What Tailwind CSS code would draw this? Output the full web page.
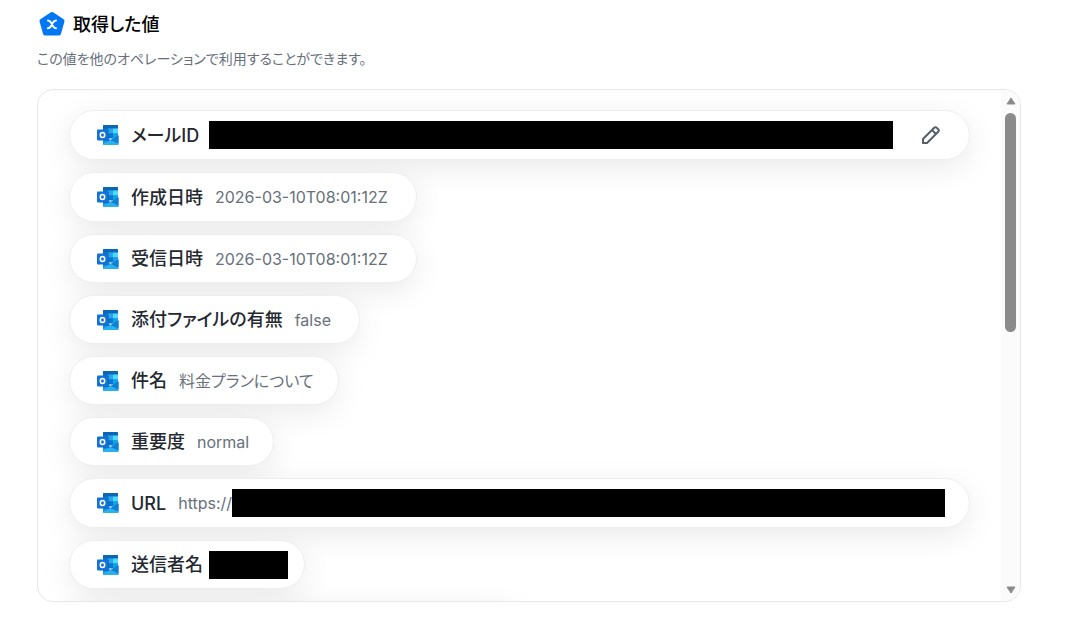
<!DOCTYPE html>
<html lang="ja">
<head>
    <meta charset="UTF-8">
    <meta name="viewport" content="width=device-width, initial-scale=1.0">
    <title>取得した値</title>
    <script src="https://cdn.jsdelivr.net/npm/@tailwindcss/browser@4"></script>
</head>
<body class="bg-white font-[Inter,'Noto_Sans_CJK_JP',sans-serif] [font-feature-settings:'palt']">

<!-- Outlook アイコン -->
<svg class="hidden">
    <symbol id="outlook" viewBox="0 0 22 20">
        <path d="M7 0h13a1 1 0 0 1 1 1v12H6V1a1 1 0 0 1 1-1z" fill="#0f78d4"/>
        <path d="M7 0h13a1 1 0 0 1 1 1v2.500H6V1a1 1 0 0 1 1-1z" fill="#0a67b8"/>
        <path d="M11 3.500h5v5h-5z" fill="#28a8ea"/>
        <path d="M16 3.500h5v5h-5z" fill="#50d9ff"/>
        <path d="M11 8.500h5v5h-5z" fill="#0078d4"/>
        <path d="M16 8.500h5v3.500l-5 2z" fill="#14a0e6"/>
        <path d="M6 11l8 4 7.500-4.500V19a1 1 0 0 1-1 1H7a1 1 0 0 1-1-1z" fill="#1490df"/>
        <path d="M13.500 15l8-4.800V18z" fill="#0f7fd0"/>
        <path d="M6 18.500l7.500-3.500 8 4a1 1 0 0 1-1 1H7a1 1 0 0 1-1-1z" fill="#28b0f0"/>
        <path d="M6 4.500h5a1 1 0 0 1 1 1V15a1 1 0 0 1-1 1H6z" fill="#0a4f9f" opacity=".5"/>
        <rect y="4.500" width="11" height="11" rx="1" fill="#1272d6"/>
        <ellipse cx="5.500" cy="10" rx="2.200" ry="2.500" fill="none" stroke="#fff" stroke-width="1.500"/>
    </symbol>
</svg>

<main class="pl-[37px] pr-16 pt-2">
    <h1 class="flex h-8 items-center gap-2 pl-[2px] text-[18px] font-medium text-black">
        <svg class="size-[26px]" viewBox="0 0 26 26" fill="none">
            <path d="M13 3L23.500 10 20 22.500H6L2.500 10z" fill="#0078f5" stroke="#0078f5" stroke-width="4" stroke-linejoin="round"/>
            <path d="M9 9.500c1.600 0 2.200.600 3 2.100l2 3.500c.800 1.500 1.500 2.100 3 2.100M17 9.500c-1.400 0-2.200.700-3.200 2.100L12 15.100c-1 1.500-1.800 2.100-3.200 2.100" stroke="#fff" stroke-width="2" stroke-linecap="round"/>
        </svg>
        取得した値
    </h1>
    <p class="mt-2 text-[14px] leading-[22px] text-[#67707b]">この値を他のオペレーションで利用することができます。</p>

    <section class="mt-[19px] flex h-[calc(100vh-121px)] overflow-hidden rounded-2xl border border-[#e5e7e9]">
        <ul class="isolate flex min-w-0 flex-1 flex-col items-start gap-3 overflow-hidden pl-[31px] pr-[31px] pt-5 text-[18px] font-medium text-[#24292f]
            *:relative *:flex *:shrink-0 *:items-center *:rounded-full *:border *:border-[#eceef0] *:bg-white *:pl-[27px]
            *:before:absolute *:before:inset-0 *:before:-z-10 *:before:rounded-full *:before:shadow-[0_8px_32px_rgba(0,0,0,0.09)]">
            <li class="h-[50px] w-full pr-7">
                <svg class="mr-3 h-5 w-[22px] shrink-0"><use href="#outlook"/></svg>
                <span>メールID</span>
                <span class="ml-2.5 h-7 flex-1 bg-black"></span>
                <button type="button" aria-label="編集" class="ml-7 text-[#57606a]">
                    <svg class="size-5" viewBox="0 0 20 20" fill="none" stroke="currentColor" stroke-width="2" stroke-linejoin="round">
                        <path d="M2 18v-4L13.200 2.800a1.800 1.800 0 0 1 2.500 0l1.500 1.500a1.800 1.800 0 0 1 0 2.500L6 18zM11 5l4 4"/>
                    </svg>
                </button>
            </li>
            <li class="h-[50px] pr-7">
                <svg class="mr-3 h-5 w-[22px]"><use href="#outlook"/></svg>
                <span>作成日時</span>
                <span class="ml-3 text-[16px] font-normal text-[#67707b]">2026-03-10T08:01:12Z</span>
            </li>
            <li class="h-[49px] pr-7">
                <svg class="mr-3 h-5 w-[22px]"><use href="#outlook"/></svg>
                <span>受信日時</span>
                <span class="ml-3 text-[16px] font-normal text-[#67707b]">2026-03-10T08:01:12Z</span>
            </li>
            <li class="h-[49px] pr-7">
                <svg class="mr-3 h-5 w-[22px]"><use href="#outlook"/></svg>
                <span>添付ファイルの有無</span>
                <span class="ml-3 text-[16px] font-normal text-[#67707b]">false</span>
            </li>
            <li class="h-[49px] pr-6">
                <svg class="mr-3 h-5 w-[22px]"><use href="#outlook"/></svg>
                <span>件名</span>
                <span class="ml-3 text-[16px] font-normal text-[#67707b]">料金プランについて</span>
            </li>
            <li class="h-[49px] pr-6">
                <svg class="mr-3 h-5 w-[22px]"><use href="#outlook"/></svg>
                <span>重要度</span>
                <span class="ml-3 text-[16px] font-normal text-[#67707b]">normal</span>
            </li>
            <li class="h-[50px] w-full pr-6">
                <svg class="mr-3 h-5 w-[22px] shrink-0"><use href="#outlook"/></svg>
                <span>URL</span>
                <span class="ml-3 text-[16px] font-normal text-[#67707b]">https://</span>
                <span class="h-7 flex-1 bg-black"></span>
            </li>
            <li class="h-[49px] pr-4">
                <svg class="mr-3 h-5 w-[22px]"><use href="#outlook"/></svg>
                <span>送信者名</span>
                <span class="ml-1.5 h-7 w-[79px] bg-black"></span>
            </li>
            <li class="h-[49px] w-1/2"></li>
        </ul>

        <!-- スクロールバー -->
        <div class="flex w-[19px] flex-col items-center bg-[#fbfbfb] py-[7px]">
            <svg class="h-2 w-[10px]" viewBox="0 0 10 8"><path d="M5 1l4 6H1z" fill="#8b8b8b" stroke="#8b8b8b" stroke-linejoin="round"/></svg>
            <div class="flex w-[11px] flex-1 flex-col py-2">
                <div class="h-[47%] rounded-full bg-[#8b8b8b]"></div>
            </div>
            <svg class="h-2 w-[10px]" viewBox="0 0 10 8"><path d="M5 7l4-6H1z" fill="#8b8b8b" stroke="#8b8b8b" stroke-linejoin="round"/></svg>
        </div>
    </section>
</main>

</body>
</html>
